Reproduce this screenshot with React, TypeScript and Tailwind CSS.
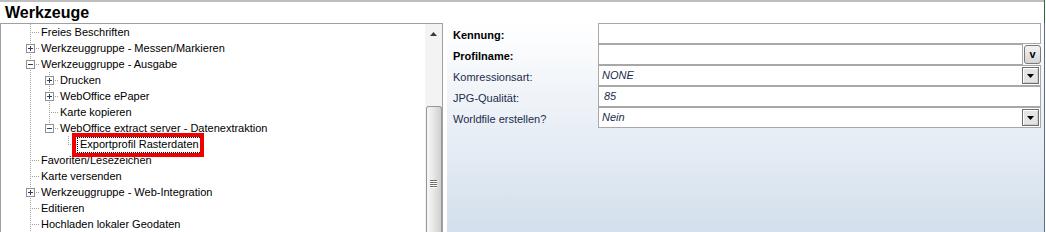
import React from "react";

type Kind = "pipe" | "blank" | "tee" | "elbow";

function Cell({ kind, exp }: { kind: Kind; exp?: "plus" | "minus" }) {
  const c = "#a0a0a0";
  const dots: React.ReactElement[] = [];
  if (kind === "pipe" || kind === "tee")
    for (let y = 0; y < 16; y += 2) dots.push(<rect key={"v" + y} x={9} y={y} width={1} height={1} fill={c} />);
  if (kind === "elbow")
    for (let y = 0; y <= 8; y += 2) dots.push(<rect key={"v" + y} x={9} y={y} width={1} height={1} fill={c} />);
  if (kind === "tee" || kind === "elbow")
    for (let x = 11; x < 19; x += 2) dots.push(<rect key={"h" + x} x={x} y={8} width={1} height={1} fill={c} />);
  return (
    <svg width={19} height={16} className="block shrink-0">
      {dots}
      {exp && (
        <g>
          <rect x={5.5} y={4.5} width={8} height={8} fill="#ffffff" stroke="#919191" />
          <rect x={7} y={8} width={5} height={1} fill="#2a3f66" />
          {exp === "plus" && <rect x={9} y={6} width={1} height={5} fill="#2a3f66" />}
        </g>
      )}
    </svg>
  );
}

type Row = { cells: Kind[]; exp?: "plus" | "minus"; label: string; selected?: boolean };

const rows: Row[] = [
  { cells: ["tee"], label: "Freies Beschriften" },
  { cells: ["tee"], exp: "plus", label: "Werkzeuggruppe - Messen/Markieren" },
  { cells: ["tee"], exp: "minus", label: "Werkzeuggruppe - Ausgabe" },
  { cells: ["pipe", "tee"], exp: "plus", label: "Drucken" },
  { cells: ["pipe", "tee"], exp: "plus", label: "WebOffice ePaper" },
  { cells: ["pipe", "tee"], label: "Karte kopieren" },
  { cells: ["pipe", "elbow"], exp: "minus", label: "WebOffice extract server - Datenextraktion" },
  { cells: ["pipe", "blank", "elbow"], label: "Exportprofil Rasterdaten", selected: true },
  { cells: ["tee"], label: "Favoriten/Lesezeichen" },
  { cells: ["tee"], label: "Karte versenden" },
  { cells: ["tee"], exp: "plus", label: "Werkzeuggruppe - Web-Integration" },
  { cells: ["tee"], label: "Editieren" },
  { cells: ["tee"], label: "Hochladen lokaler Geodaten" },
];

function DropButton() {
  return (
    <div className="mr-[1px] flex h-[17px] w-[17px] shrink-0 items-center justify-center border border-[#6e6e6e] bg-[#e4e4e4] shadow-[inset_1px_1px_0_#ffffff,inset_-1px_-1px_0_#cfcfcf]">
      <svg width={7} height={4} className="block">
        <polygon points="0,0 7,0 3.5,4" fill="#000000" />
      </svg>
    </div>
  );
}

type Field = { label: string; bold?: boolean; value?: string; pl?: string; kind: "text" | "combo" | "drop" };

const fields: Field[] = [
  { label: "Kennung:", bold: true, kind: "text" },
  { label: "Profilname:", bold: true, kind: "combo" },
  { label: "Komressionsart:", kind: "drop", value: "NONE", pl: "pl-[3px]" },
  { label: "JPG-Qualität:", kind: "text", value: "85", pl: "pl-[5px]" },
  { label: "Worldfile erstellen?", kind: "drop", value: "Nein", pl: "pl-[3px]" },
];

export default function App() {
  return (
    <div className="flex h-[232px] w-[1046px] overflow-hidden bg-white font-['Liberation_Sans',Arial,sans-serif] text-[11px] text-black">
      <div className="flex w-[1044px] shrink-0 flex-col">
        <div className="h-[2px] w-full bg-[#bdbdbd]" />
        <div className="h-[21px] pl-[5px] text-[16px] font-bold leading-[21px]">Werkzeuge</div>
        <div className="flex h-[209px]">
          {/* Tree panel */}
          <div className="flex h-full w-[443px] shrink-0 border-l border-r border-t border-[#a0a0a0]">
            <div className="w-[424px] shrink-0 overflow-hidden">
              {rows.map((r, i) => (
                <div key={i} className="flex h-[16px] items-start">
                  <div className="w-[20px] shrink-0" />
                  {r.cells.map((k, j) => (
                    <Cell key={j} kind={k} exp={j === r.cells.length - 1 ? r.exp : undefined} />
                  ))}
                  {r.selected ? (
                    <span className="relative -ml-[1px] whitespace-nowrap px-[3px] leading-[16px]">
                      {r.label}
                      <span className="absolute left-0 right-0 top-[1px] h-[16px] border border-dotted border-black" />
                      <span className="absolute left-[-5px] right-[-2px] top-[-3px] h-[24px] border-4 border-[#ee0000]" />
                    </span>
                  ) : (
                    <span className="whitespace-nowrap pl-[1px] leading-[16px]">{r.label}</span>
                  )}
                </div>
              ))}
            </div>
            {/* Scrollbar */}
            <div className="flex h-full w-[17px] shrink-0 flex-col bg-[#f3f3f3]">
              <div className="flex h-[17px] shrink-0 items-center justify-center pt-[3px]">
                <svg width={7} height={4} className="block">
                  <polygon points="0,4 7,4 3.5,0" fill="#3a3a3a" />
                </svg>
              </div>
              <div className="h-[65px] shrink-0" />
              <div className="ml-[1px] flex w-[16px] flex-1 flex-col rounded-t-[3px] border border-b-0 border-[#989898] bg-linear-to-r from-[#f6f6f6] via-[#e6e6e6] to-[#d0d0d0]">
                <div className="h-[73px] shrink-0" />
                <div className="flex justify-center pr-[1px]">
                  <svg width={7} height={8} className="block">
                    <rect x={0} y={0} width={7} height={1} fill="#707070" />
                    <rect x={0} y={1} width={7} height={1} fill="#ffffff" />
                    <rect x={0} y={2} width={7} height={1} fill="#707070" />
                    <rect x={0} y={3} width={7} height={1} fill="#ffffff" />
                    <rect x={0} y={4} width={7} height={1} fill="#707070" />
                    <rect x={0} y={5} width={7} height={1} fill="#ffffff" />
                    <rect x={0} y={6} width={7} height={1} fill="#707070" />
                    <rect x={0} y={7} width={7} height={1} fill="#ffffff" />
                  </svg>
                </div>
              </div>
            </div>
          </div>
          <div className="w-[4px] shrink-0" />
          {/* Property panel */}
          <div className="h-full w-[597px] shrink-0 bg-linear-to-b from-white to-[#d3dfec] pr-[3px]">
            {fields.map((f, i) => (
              <div key={i} className="flex h-[21px]">
                <div
                  className={
                    "w-[151px] shrink-0 whitespace-nowrap pl-[6px] pt-[4px] leading-[16px] " +
                    (f.bold ? "font-bold text-black" : "text-[#1b2c4c]")
                  }
                >
                  {f.label}
                </div>
                {f.kind === "combo" ? (
                  <div className="flex flex-1">
                    <div className="h-[21px] w-[425px] border border-[#a8a8a8] bg-white" />
                    <div className="ml-[1px] mt-[1px] flex h-[19px] w-[17px] items-center justify-center rounded-[3px] border border-[#7a7a7a] bg-linear-to-b from-[#f4f4f4] to-[#d4d4d4] pb-[1px] text-[11px] font-bold leading-none text-black">
                      v
                    </div>
                  </div>
                ) : (
                  <div className="flex h-[21px] flex-1 items-center border border-[#a8a8a8] bg-white">
                    <div className={"flex-1 whitespace-nowrap italic leading-[19px] text-[#1b2c4c] " + (f.pl ?? "")}>
                      {f.value ?? ""}
                    </div>
                    {f.kind === "drop" && <DropButton />}
                  </div>
                )}
              </div>
            ))}
          </div>
        </div>
      </div>
      <div className="flex w-[1px] shrink-0 flex-col">
        <div className="h-[23px] bg-[#2d6b3c]" />
        <div className="flex-1 bg-[#5b6b82]" />
      </div>
    </div>
  );
}
